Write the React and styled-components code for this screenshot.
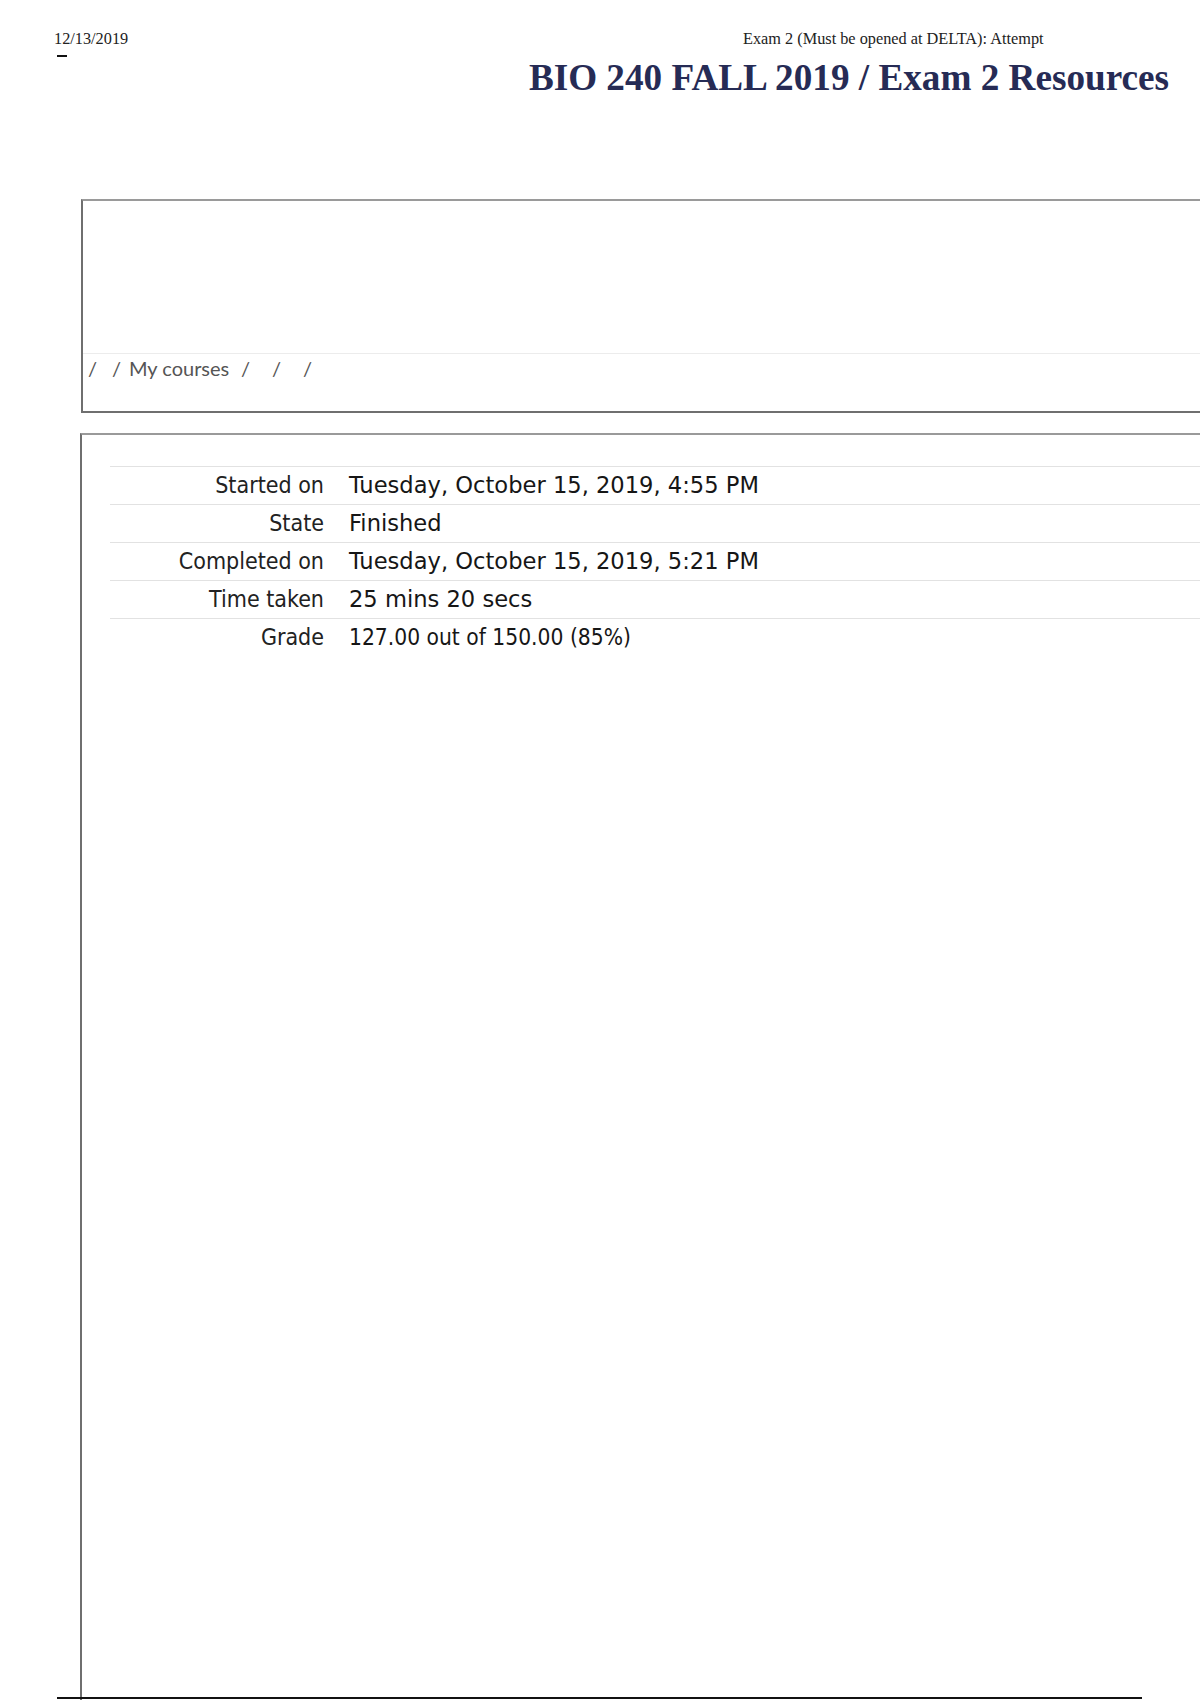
import React from 'react';
import styled, { createGlobalStyle } from 'styled-components';

const GlobalStyle = createGlobalStyle`
  html, body {
    margin: 0;
    padding: 0;
    background: #fff;
  }
  body {
    font-family: "Liberation Serif", serif;
    overflow: hidden;
  }
`;

const Page = styled.div`
  position: relative;
  width: 1200px;
  height: 1700px;
  overflow: hidden;
  background: #fff;
`;

const PrintHeader = styled.div`
  display: grid;
  grid-template-columns: 689px auto;
  padding: 30px 0 0 54px;
  font-family: "Liberation Serif", serif;
  font-size: 16.3px;
  color: #222;
  line-height: 18px;
`;

const DateBlock = styled.div`
  display: flex;
  flex-direction: column;
  gap: 7px;
`;

const Dash = styled.span`
  display: block;
  width: 10px;
  height: 2px;
  margin-left: 3px;
  background: #111;
`;

const Title = styled.h1`
  margin: 1px 31px 0 0;
  text-align: right;
  font-family: "Liberation Serif", serif;
  font-weight: 700;
  font-size: 37.2px;
  line-height: 40px;
  color: #262b55;
`;

const Panel = styled.div`
  margin-left: ${p => p.$left}px;
  margin-top: ${p => p.$top}px;
  width: 1200px;
  height: ${p => p.$height}px;
  border: 2px solid #6f6f6f;
  border-top-color: #9a9a9a;
  box-sizing: border-box;
  display: flex;
  flex-direction: column;
`;

const HeaderSpace = styled.div`
  height: 152px;
  border-bottom: 1px solid #ececec;
`;

const Breadcrumb = styled.nav`
  display: flex;
  align-items: center;
  padding: 2px 0 0 5px;
  font-family: Lato, "Open Sans", sans-serif;
  font-size: 20px;
  line-height: 24px;
  color: #555;
`;

const Crumb = styled.span`
  display: inline-block;
  min-width: ${p => p.$width || 0}px;
`;

const Summary = styled.div`
  margin: 31px 0 0 28px;
  display: flex;
  flex-direction: column;
`;

const Row = styled.div`
  display: grid;
  grid-template-columns: 214px auto;
  column-gap: 25px;
  align-items: center;
  height: 38px;
  padding-bottom: 2px;
  border-top: 1px solid #e2e2e2;
  box-sizing: border-box;
`;

const Label = styled.div`
  text-align: right;
  font-family: "DejaVu Sans Condensed", "DejaVu Sans", sans-serif;
  font-size: 23px;
  color: #222;
`;

const Value = styled.div`
  font-family: ${p => p.$condensed
    ? '"DejaVu Sans Condensed", "DejaVu Sans", sans-serif'
    : '"DejaVu Sans", sans-serif'};
  font-size: 22.6px;
  color: #161616;
`;

const PageBreak = styled.div`
  position: absolute;
  left: 57px;
  bottom: 1px;
  width: 1085px;
  height: 2px;
  background: #111;
`;

const rows = [
  { label: 'Started on', value: 'Tuesday, October 15, 2019, 4:55 PM' },
  { label: 'State', value: 'Finished' },
  { label: 'Completed on', value: 'Tuesday, October 15, 2019, 5:21 PM' },
  { label: 'Time taken', value: '25 mins 20 secs' },
  { label: 'Grade', value: '127.00 out of 150.00 (85%)', condensed: true },
];

const crumbs = [
  { text: '/', width: 24 },
  { text: '/', width: 17 },
  { text: 'My courses', width: 112 },
  { text: '/', width: 31 },
  { text: '/', width: 31 },
  { text: '/' },
];

export default function App() {
  return (
    <Page>
      <GlobalStyle />
      <PrintHeader>
        <DateBlock>
          <span>12/13/2019</span>
          <Dash />
        </DateBlock>
        <span>Exam 2 (Must be opened at DELTA): Attempt</span>
      </PrintHeader>
      <Title>BIO 240 FALL 2019 / Exam 2 Resources</Title>
      <Panel $left={81} $top={101} $height={214}>
        <HeaderSpace />
        <Breadcrumb>
          {crumbs.map((c, i) => (
            <Crumb key={i} $width={c.width}>{c.text}</Crumb>
          ))}
        </Breadcrumb>
      </Panel>
      <Panel $left={80} $top={20} $height={1300}>
        <Summary>
          {rows.map(r => (
            <Row key={r.label}>
              <Label>{r.label}</Label>
              <Value $condensed={r.condensed}>{r.value}</Value>
            </Row>
          ))}
        </Summary>
      </Panel>
      <PageBreak />
    </Page>
  );
}
